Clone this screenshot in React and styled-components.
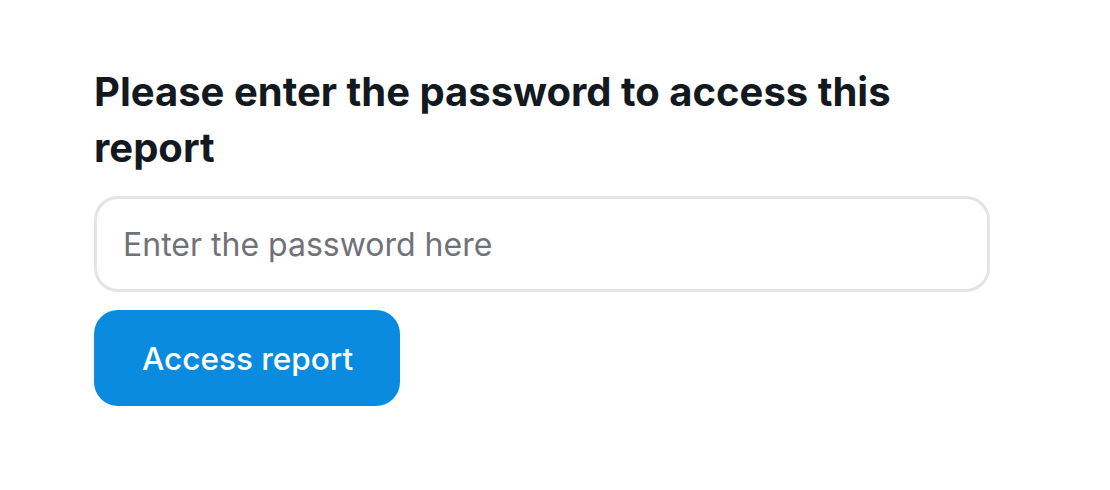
import React from "react";
import styled, { createGlobalStyle } from "styled-components";

const Global = createGlobalStyle`
  html, body { margin: 0; padding: 0; background: #ffffff; }
  body { font-family: Inter, "Noto Sans", sans-serif; -webkit-font-smoothing: antialiased; }
  * { box-sizing: border-box; }
`;

const Page = styled.div`
  padding: 64px 0 0 94px;
`;

const Form = styled.form`
  width: 896px;
  display: flex;
  flex-direction: column;
  align-items: flex-start;
`;

const Title = styled.h1`
  margin: 0 0 20px;
  font-size: 40px;
  line-height: 56px;
  font-weight: 700;
  color: #131a1f;
`;

const Input = styled.input`
  width: 100%;
  height: 96px;
  border: 3px solid #e4e4e7;
  border-radius: 24px;
  padding: 0 26px;
  font-family: Inter, sans-serif;
  font-size: 32px;
  color: #131a1f;
  background: #fff;
  outline: none;
  &::placeholder { color: #71717a; }
`;

const Button = styled.button`
  margin-top: 18px;
  height: 96px;
  padding: 0 47px 0 48px;
  border: none;
  border-radius: 24px;
  background: #0a8be0;
  color: #fff;
  font-family: Inter, sans-serif;
  font-size: 31.5px;
  font-weight: 500;
  cursor: pointer;
`;

export default function App() {
  return (
    <>
      <Global />
      <Page>
        <Form onSubmit={(e) => e.preventDefault()}>
          <Title>Please enter the password to access this report</Title>
          <Input type="password" placeholder="Enter the password here" />
          <Button type="submit">Access report</Button>
        </Form>
      </Page>
    </>
  );
}
